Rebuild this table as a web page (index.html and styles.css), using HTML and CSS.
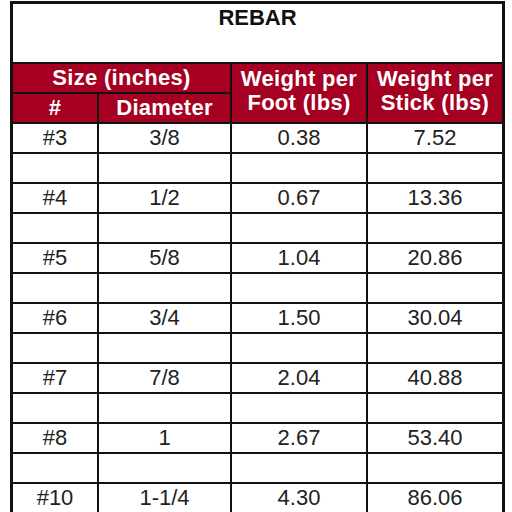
FILE: index.html
```html
<!DOCTYPE html>
<html>
<head>
<meta charset="utf-8">
<link rel="stylesheet" href="styles.css">
</head>
<body>
<div class="wrap">
<table class="rebar">
  <colgroup>
    <col class="c1"><col class="c2"><col class="c3"><col class="c4">
  </colgroup>
  <thead>
    <tr><th class="title" colspan="4">REBAR</th></tr>
    <tr class="hd">
      <th colspan="2">Size (inches)</th>
      <th rowspan="2" class="two">Weight per<br>Foot (lbs)</th>
      <th rowspan="2" class="two last">Weight per<br>Stick (lbs)</th>
    </tr>
    <tr class="hd">
      <th>#</th>
      <th>Diameter</th>
    </tr>
  </thead>
  <tbody>
    <tr><td>#3</td><td>3/8</td><td>0.38</td><td class="last">7.52</td></tr>
    <tr><td></td><td></td><td></td><td class="last"></td></tr>
    <tr><td>#4</td><td>1/2</td><td>0.67</td><td class="last">13.36</td></tr>
    <tr><td></td><td></td><td></td><td class="last"></td></tr>
    <tr><td>#5</td><td>5/8</td><td>1.04</td><td class="last">20.86</td></tr>
    <tr><td></td><td></td><td></td><td class="last"></td></tr>
    <tr><td>#6</td><td>3/4</td><td>1.50</td><td class="last">30.04</td></tr>
    <tr><td></td><td></td><td></td><td class="last"></td></tr>
    <tr><td>#7</td><td>7/8</td><td>2.04</td><td class="last">40.88</td></tr>
    <tr><td></td><td></td><td></td><td class="last"></td></tr>
    <tr><td>#8</td><td>1</td><td>2.67</td><td class="last">53.40</td></tr>
    <tr><td></td><td></td><td></td><td class="last"></td></tr>
    <tr><td>#10</td><td>1-1/4</td><td>4.30</td><td class="last">86.06</td></tr>
  </tbody>
</table>
</div>
</body>
</html>
```
FILE: styles.css
```css
html, body {
  margin: 0;
  padding: 0;
  background: #ffffff;
}
.wrap {
  padding: 1px 0 0 10px;
}
.rebar {
  width: 495px;
  table-layout: fixed;
  border-collapse: separate;
  border-spacing: 0;
  border: 3px solid #111;
  font-family: "Liberation Sans", Arial, sans-serif;
  font-size: 22px;
}
.c1 { width: 86px; }
.c2 { width: 133px; }
.c3 { width: 136px; }
.c4 { width: 134px; }
.rebar th, .rebar td {
  padding: 0;
  border-right: 2px solid #111;
  border-bottom: 2px solid #111;
  text-align: center;
  box-sizing: border-box;
}
.rebar .last { border-right: none; }
.rebar th.title {
  border-right: none;
  height: 60px;
  vertical-align: top;
  font-weight: bold;
  color: #111;
  line-height: 25px;
  padding-top: 1px;
  background: #fff;
}
.hd th {
  background: #a50021;
  color: #fff;
  font-weight: bold;
  height: 30px;
  line-height: 24px;
  letter-spacing: 0.3px;
  vertical-align: middle;
}
.hd th.two {
  padding-bottom: 4px;
}
.rebar td {
  height: 30px;
  line-height: 26px;
  color: #222;
  vertical-align: middle;
}
```
